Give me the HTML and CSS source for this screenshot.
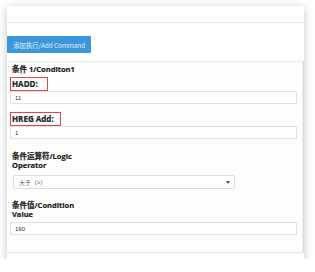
FILE: index.html
```html
<!DOCTYPE html>
<html lang="zh">

<head>
    <meta charset="utf-8">
    <meta name="viewport" content="width=device-width, initial-scale=1.0">
    <title>Add Command</title>
    <link rel="stylesheet" href="styles.css">
</head>

<body>
    <div class="card">
        <!--top bar-->
        <div class="topbar"></div>
        <!--toolbar with add button-->
        <div class="toolbar">
            <button class="btn-add">添加执行/Add Command</button>
        </div>
        <!--condition panel-->
        <section class="panel">
            <h3 class="cond-title">条件 1/Conditon1</h3>

            <label class="field-label marked">HADD:</label>
            <input class="field-input" type="text" value="11">

            <label class="field-label marked second">HREG Add:</label>
            <input class="field-input" type="text" value="1">

            <label class="field-label wrap">条件运算符/Logic Operator</label>
            <div class="select-box">
                <span>大于（&gt;）</span>
                <span class="caret"></span>
            </div>

            <label class="field-label wrap last">条件值/Condition Value</label>
            <input class="field-input" type="text" value="190">
        </section>
        <div class="footer"></div>
    </div>
</body>

</html>
```

FILE: styles.css
```css
body,
html {
    margin: 0;
    background-color: #fff;
    font-family: "Open Sans", "Noto Sans CJK SC", sans-serif;
}

body {
    padding: 6px 11px 0 7px;
}

.card {
    background-color: #fff;
    height: 253px;
    box-shadow: 0 2px 9px rgba(0, 0, 0, .24);
    display: flex;
    flex-direction: column;
}

.topbar {
    height: 16px;
    border-bottom: 1px solid #e6e6e6;
}

/*toolbar*/

.toolbar {
    padding: 13px 0 8px 0;
}

.btn-add {
    display: block;
    width: 84px;
    height: 17px;
    padding: 0;
    border: none;
    border-radius: 1px;
    background-color: #3b97d9;
    color: #e3f0fa;
    font-family: "Noto Sans CJK SC", sans-serif;
    font-size: 6.5px;
    letter-spacing: -0.1px;
}

/*panel*/

.panel {
    flex: 1;
    border-top: 1px solid #ececec;
    border-bottom: 1px solid #e2e2e2;
    border-right: 1px solid #ececec;
    margin-right: 1px;
    box-shadow: 1px 0 0 #dcdcdc;
    background-color: #fdfdfd;
    padding: 2px 5px 0 3px;
}

.cond-title {
    margin: 0 0 0 2px;
    height: 10px;
    line-height: 10px;
    font-size: 7.5px;
    font-weight: bold;
    color: #222;
    -webkit-text-stroke: 0.2px #222;
}

.field-label {
    display: block;
    font-size: 7.5px;
    font-weight: bold;
    color: #222;
    line-height: 9px;
    margin-left: 2px;
    -webkit-text-stroke: 0.2px #222;
}

.field-label.marked {
    width: fit-content;
    margin: 3px 0 0 0;
    height: 12px;
    line-height: 12px;
    padding: 0 9px 0 1px;
    border: 1px solid #e04848;
    font-size: 8px;
}

.field-label.second {
    margin-top: 8px;
    padding-right: 6px;
}

.field-label.wrap {
    width: 74px;
    margin-top: 13px;
    margin-bottom: 5px;
}

.field-label.last {
    margin-top: 12px;
    margin-bottom: 3px;
}

.field-input {
    display: block;
    box-sizing: border-box;
    width: 287px;
    height: 13px;
    margin: 0;
    padding: 0 0 0 4px;
    border: 1px solid #e0e0e0;
    border-radius: 1px;
    background-color: #fff;
    font-family: "Liberation Sans", sans-serif;
    font-size: 6px;
    color: #333;
    outline: none;
}

/*select*/

.select-box {
    box-sizing: border-box;
    width: 222px;
    height: 14px;
    margin-left: 3px;
    padding: 0 4px 0 5px;
    border: 1px solid #dedede;
    border-radius: 1px;
    background-color: #fff;
    display: flex;
    align-items: center;
    justify-content: space-between;
    font-family: "Noto Sans CJK SC", sans-serif;
    font-size: 6px;
    color: #555;
}

.caret {
    width: 0;
    height: 0;
    border-left: 2px solid transparent;
    border-right: 2px solid transparent;
    border-top: 3px solid #555;
}

.footer {
    height: 6px;
}
```
